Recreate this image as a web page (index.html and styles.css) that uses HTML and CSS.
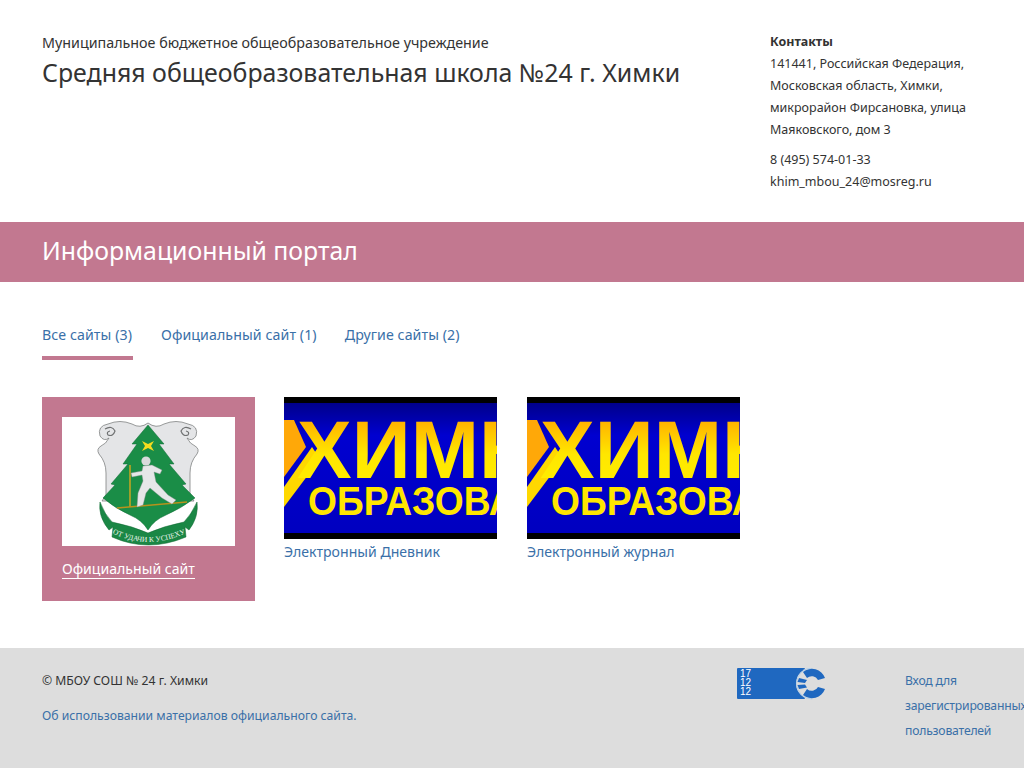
FILE: index.html
```html
<!DOCTYPE html>
<html lang="ru">
<head>
    <meta charset="UTF-8">
    <title>Информационный портал</title>
    <link rel="stylesheet" href="styles.css">
</head>
<body>
    <header class="top">
        <div class="school">
            <div class="school-type">Муниципальное бюджетное общеобразовательное учреждение</div>
            <div class="school-name">Средняя общеобразовательная школа №24 г. Химки</div>
        </div>
        <div class="contacts">
            <b>Контакты</b>
            <p>141441, Российская Федерация, Московская область, Химки, микрорайон Фирсановка, улица Маяковского, дом 3</p>
            <p class="phone">8 (495) 574-01-33<br>khim_mbou_24@mosreg.ru</p>
        </div>
    </header>

    <div class="band">Информационный портал</div>

    <nav class="tabs">
        <a class="tab active" href="#">Все сайты (3)</a>
        <a class="tab" href="#">Официальный сайт (1)</a>
        <a class="tab" href="#">Другие сайты (2)</a>
    </nav>

    <main class="sites">
        <a class="site site-main" href="#">
            <svg class="emblem" viewBox="0 0 173 129" width="173" height="129">
                <rect width="173" height="129" fill="#fff"/>
                <!-- щит -->
                <path d="M86 6 Q78 12 70 7 Q58 2 46 7 Q35 9 38 19 Q42 25 47 21 Q44 27 39 29 Q34 32 37 37 Q44 45 44 56 L44 78 L40 84 L132 84 L128 78 L128 56 Q128 45 135 37 Q138 32 133 29 Q128 27 125 21 Q130 25 134 19 Q137 9 126 7 Q114 2 102 7 Q94 12 86 6 Z" fill="#e4e5e7" stroke="#7f8182" stroke-width="0.8"/>
                <path d="M43 12 Q50 8 53 14 Q51 20 46 18 Q44 15 48 14 M129 12 Q122 8 119 14 Q121 20 126 18 Q128 15 124 14" fill="none" stroke="#6f7172" stroke-width="1.2"/>
                <!-- ель -->
                <path d="M86 8 L102 27 L97 27 L112 47 L107 47 L124 67 L120 68 L133 81 Q118 92 104 98 Q92 103 86 113 Q80 103 68 98 Q54 92 41 81 L53 68 L49 67 L66 47 L61 47 L75 27 L70 27 Z" fill="#1a8d47" stroke="#0f6b34" stroke-width="0.5"/>
                <path d="M80 24 L86 27 L92 24 L89 29 L92 34 L86 31 L80 34 L83 29 Z" fill="#f6dc1e"/>
                <!-- лыжник -->
                <path d="M68 48 L68 90" stroke="#d7a81e" stroke-width="1.4"/>
                <path d="M55 91 L125 85" stroke="#b8921c" stroke-width="1.6"/>
                <circle cx="84" cy="44" r="4.6" fill="#d9dadb"/>
                <path d="M69 56 L80 54 L81 49 L90 48 L100 53 L98 57 L92 55 L94 65 L106 78 L114 83 L110 87 L100 81 L88 71 L84 76 L81 88 L75 90 L76 76 L81 64 L80 58 L70 60 Z" fill="#e6e7e8" stroke="#8a8c8d" stroke-width="0.4"/>
                <!-- лента -->
                <path d="M38 85 Q43 98 50 105 Q70 109 86 116 Q102 109 122 105 Q129 98 135 85 Q137 100 127 113 L123 110 L124 120 Q86 136 50 120 L51 110 L47 113 Q36 100 38 85 Z" fill="#1a8745" stroke="#0e6631" stroke-width="0.5"/>
                <path id="motto" d="M52 117 Q86 133 122 117" fill="none"/>
                <text class="motto"><textPath href="#motto" startOffset="50%" text-anchor="middle">ОТ УДАЧИ К УСПЕХУ</textPath></text>
            </svg>
            <span class="site-title"><span class="site-title-line">Официальный сайт</span></span>
        </a>
        <a class="site" href="#">
            <svg class="banner" viewBox="0 0 213 142" width="213" height="142">
                <defs>
                    <linearGradient id="blueFill" x1="0" y1="0" x2="0" y2="1">
                        <stop offset="0" stop-color="#00008a"/>
                        <stop offset="0.25" stop-color="#0000d0"/>
                        <stop offset="1" stop-color="#0000c0"/>
                    </linearGradient>
                    <linearGradient id="goldFill" x1="0" y1="0" x2="0" y2="1">
                        <stop offset="0.2" stop-color="#ffb400"/>
                        <stop offset="0.55" stop-color="#ffe600"/>
                        <stop offset="1" stop-color="#fff000"/>
                    </linearGradient>
                </defs>
                <rect width="213" height="142" fill="#000"/>
                <rect y="6" width="213" height="130" fill="url(#blueFill)"/>
                <path d="M0 23 L10 23 L22 50 L0 80 Z" fill="#ffa808"/>
                <path d="M0 90 L28 50 L36 62 L0 110 Z" fill="#ffd800"/>
                <text class="banner-big" x="13" y="81">ХИМК</text>
                <text class="banner-small" transform="translate(24 118) scale(0.93 1)">ОБРАЗОВАНИЕ</text>
            </svg>
            <span class="site-label">Электронный Дневник</span>
        </a>
        <a class="site" href="#">
            <svg class="banner" viewBox="0 0 213 142" width="213" height="142">
                <rect width="213" height="142" fill="#000"/>
                <rect y="6" width="213" height="130" fill="url(#blueFill)"/>
                <path d="M0 23 L10 23 L22 50 L0 80 Z" fill="#ffa808"/>
                <path d="M0 90 L28 50 L36 62 L0 110 Z" fill="#ffd800"/>
                <text class="banner-big" x="13" y="81">ХИМК</text>
                <text class="banner-small" transform="translate(24 118) scale(0.93 1)">ОБРАЗОВАНИЕ</text>
            </svg>
            <span class="site-label">Электронный журнал</span>
        </a>
    </main>

    <footer class="bottom">
        <div class="copy">
            <div>© МБОУ СОШ № 24 г. Химки</div>
            <a class="copy-link" href="#">Об использовании материалов официального сайта.</a>
        </div>
        <svg class="counter" viewBox="0 0 90 32" width="90" height="32">
            <rect x="0" y="0" width="68" height="31" rx="1" fill="#1f68c0"/>
            <text class="counter-num" x="3" y="9">17</text>
            <text class="counter-num" x="3" y="18">12</text>
            <text class="counter-num" x="3" y="27">12</text>
            <circle cx="75" cy="15.5" r="16" fill="#ddd"/>
            <circle cx="75" cy="15.5" r="15.5" fill="none" stroke="#b4d0ea" stroke-width="1" stroke-dasharray="49 48" stroke-dashoffset="-24"/>
            <path d="M66 4 A14 14 0 0 1 88 10 L81 12 A7 7 0 0 0 70 10 Z" fill="#1f68c0"/>
            <path d="M66 27 A14 14 0 0 0 88 21 L81 19 A7 7 0 0 1 70 21 Z" fill="#1f68c0"/>
            <path d="M62 10 L70 12 L68 15 L60.5 14 Z M60.5 17 L68 16.5 L70 19.5 L62 21 Z" fill="#1f68c0"/>
        </svg>
        <a class="login" href="#">Вход для зарегистрированных пользователей</a>
    </footer>
</body>
</html>
```

FILE: styles.css
```css
html, body {
    overflow-x: hidden;
}

body {
    margin: 0;
    font-family: 'Noto Sans', sans-serif;
    color: #333;
    font-size: 13px;
    background-color: #fff;
}

a {
    color: #3a70a8;
    text-decoration: none;
}

.top {
    display: flex;
    justify-content: space-between;
    height: 222px;
    padding-left: 42px;
    box-sizing: border-box;
}

.school {
    padding-top: 32px;
}

.school-type {
    font-size: 14.3px;
    line-height: 22px;
}

.school-name {
    font-size: 24.9px;
    line-height: 36px;
}

.contacts {
    width: 254px;
    padding-top: 31px;
    line-height: 22px;
    font-size: 12.5px;
}

.contacts b {
    display: block;
}

.contacts p {
    margin: 0;
    width: 200px;
}

.contacts .phone {
    margin-top: 8px;
}

.band {
    height: 60px;
    line-height: 56px;
    padding-left: 42px;
    background-color: #c27890;
    color: #fff;
    font-size: 24.8px;
}

.tabs {
    display: flex;
    gap: 28px;
    padding: 42px 0 0 42px;
    height: 32px;
}

.tab {
    height: 32px;
    line-height: 22px;
    font-size: 14.2px;
    letter-spacing: 0.08px;
}

.tab.active {
    border-bottom: 4px solid #c27890;
    padding-right: 1px;
}

.sites {
    display: flex;
    gap: 30px;
    padding: 41px 0 0 42px;
    height: 251px;
}

.site {
    display: flex;
    flex-direction: column;
    width: 213px;
    align-self: flex-start;
    font-size: 14.1px;
}

.site svg {
    display: block;
}

.site-main {
    box-sizing: border-box;
    height: 204px;
    margin-right: -1px;
    padding: 20px;
    background-color: #c27890;
    color: #fff;
}

.site-title {
    margin-top: 13px;
}

.site-title-line {
    border-bottom: 1px solid #fff;
    display: inline-block;
    line-height: 19px;
}

.site-label {
    margin-top: 3px;
    line-height: 20px;
}

.motto {
    font-family: 'Liberation Serif', serif;
    font-size: 7.5px;
    fill: #eef6ee;
}

.banner-big {
    font-family: 'Liberation Sans', sans-serif;
    font-weight: bold;
    font-size: 82px;
    fill: url(#goldFill);
}

.banner-small {
    font-family: 'Liberation Sans', sans-serif;
    font-weight: bold;
    font-size: 40px;
    fill: #ffe600;
}

.bottom {
    display: flex;
    height: 120px;
    background-color: #ddd;
    box-sizing: border-box;
    padding: 20px 0 0 42px;
}

.copy {
    flex: none;
    width: 695px;
    line-height: 25px;
    font-size: 12.2px;
}

.copy-link {
    display: block;
    margin-top: 10px;
}

.counter {
    flex: none;
}

.counter-num {
    font-family: 'Liberation Sans', sans-serif;
    font-size: 10px;
    fill: #fff;
}

.login {
    flex: none;
    width: 125px;
    margin-left: 78px;
    line-height: 25px;
    font-size: 12.2px;
    letter-spacing: -0.2px;
}
```
